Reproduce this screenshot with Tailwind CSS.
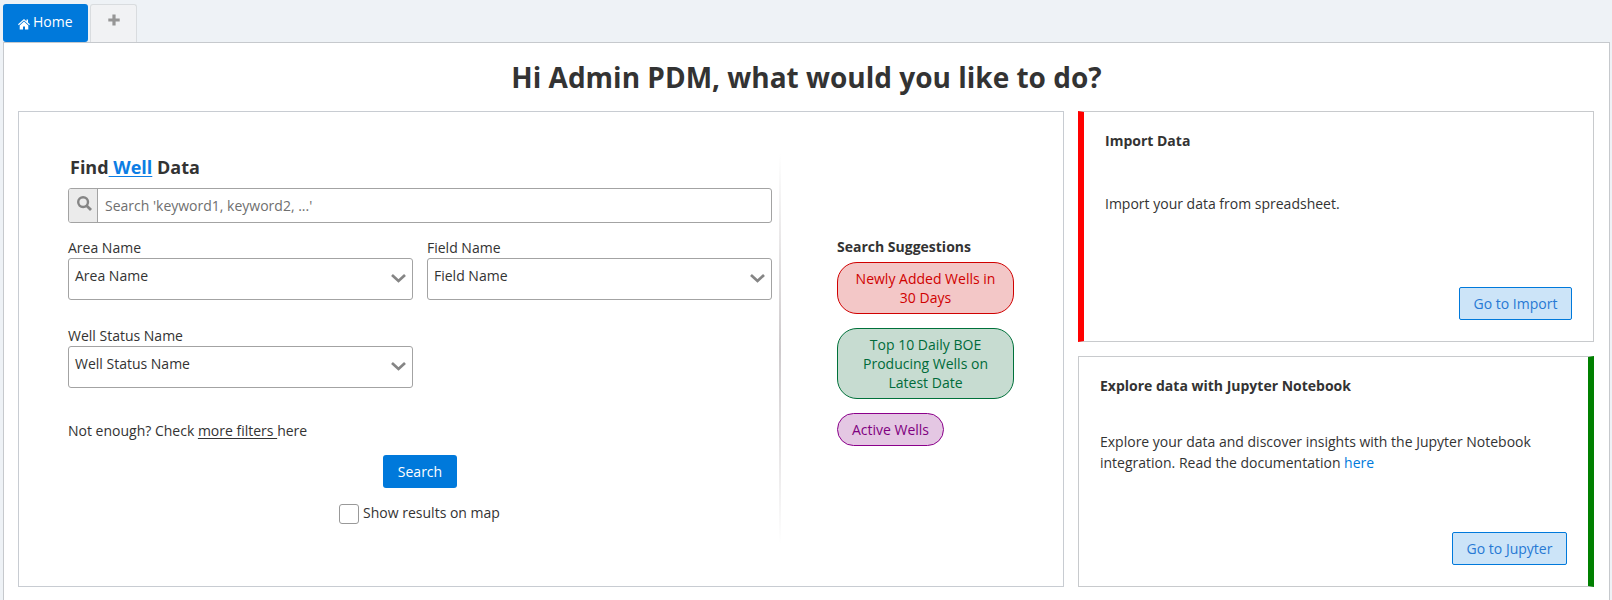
<!DOCTYPE html>
<html lang="en">
<head>
<meta charset="utf-8">
<title>Home</title>
<script src="https://cdn.jsdelivr.net/npm/@tailwindcss/browser@4"></script>
</head>
<body class="h-[600px] overflow-hidden bg-[#eef2f6] font-['Open_Sans',sans-serif] text-[14px] leading-5 text-[#333]">
<div class="flex h-full flex-col pl-[3px] pr-[2px] pt-1">
  <nav class="flex h-[38px] shrink-0 gap-[2px]">
    <a class="flex h-[38px] w-[85px] rounded-[3px] bg-[#0079db] pl-[15px] pt-2 text-white">
      <svg class="mt-[7px] mr-[3px] h-[11px] w-3 shrink-0" viewBox="0 0 12 11" fill="#fff"><path d="M6 0 0 5.3l.8.9L6 1.6l5.2 4.6.8-.9-2-1.8V.6H8.5v1.6z"/><path d="M6 2.6 1.7 6.4v4H5V7.6h2v2.8h3.3v-4z"/></svg>
      Home
    </a>
    <a class="flex h-[38px] w-[47px] justify-center rounded-t-[3px] border border-b-0 border-[#d9dcdf] bg-[#f1f2f4]">
      <svg class="mt-[9px] h-3 w-3" viewBox="0 0 12 12"><path d="M6 .5v11M.3 6h11.4" stroke="#969696" stroke-width="3.2" fill="none"/></svg>
    </a>
  </nav>
  <main class="flex flex-1 flex-col border border-b-0 border-[#c6c9cd] bg-white px-[14px]">
    <h1 class="mt-[14px] h-[54px] text-center text-[28px] font-bold leading-10">Hi Admin PDM, what would you like to do?</h1>
    <div class="flex h-[476px] gap-[14px]">
      <section class="flex w-[1046px] shrink-0 border border-[#c8ccd2] pl-[49px]">
        <div class="w-[704px] shrink-0 pt-[41px]">
          <h2 class="h-[35px] pl-[2px] text-[18px] font-bold leading-7">Find<span class="text-[#0c7de4] underline decoration-1 underline-offset-2">&nbsp;Well</span> Data</h2>
          <div class="flex h-[35px] rounded-[3px] border border-[#a3a3a3]">
            <span class="flex w-[29px] justify-center rounded-l-[2px] border-r border-[#a3a3a3] bg-[#ebebeb] pt-[7px]">
              <svg class="ml-[2px] h-[15px] w-[15px]" viewBox="0 0 15 15" fill="none" stroke="#858585"><circle cx="6.1" cy="6.1" r="4.9" stroke-width="2.4"/><path d="m9.7 9.7 4.3 4.3" stroke-width="2.8"/></svg>
            </span>
            <span class="pl-[7px] pt-[7px] text-[#6f6f6f]">Search 'keyword1, keyword2, ...'</span>
          </div>
          <div class="mt-[15px] grid grid-cols-2 gap-x-[14px] gap-y-[26px]">
            <div>
              <div class="h-5">Area Name</div>
              <div class="flex h-[42px] justify-between rounded-[3px] border border-[#a3a3a3] pl-[6px] pr-[6px] pt-[7px]">Area Name
                <svg class="mt-2 h-[9px] w-[15px]" viewBox="0 0 15 9"><path d="m1 1 6.5 6L14 1" fill="none" stroke="#858585" stroke-width="2.7"/></svg></div>
            </div>
            <div>
              <div class="h-5">Field Name</div>
              <div class="flex h-[42px] justify-between rounded-[3px] border border-[#a3a3a3] pl-[6px] pr-[6px] pt-[7px]">Field Name
                <svg class="mt-2 h-[9px] w-[15px]" viewBox="0 0 15 9"><path d="m1 1 6.5 6L14 1" fill="none" stroke="#858585" stroke-width="2.7"/></svg></div>
            </div>
            <div>
              <div class="h-5">Well Status Name</div>
              <div class="flex h-[42px] justify-between rounded-[3px] border border-[#a3a3a3] pl-[6px] pr-[6px] pt-[7px]">Well Status Name
                <svg class="mt-2 h-[9px] w-[15px]" viewBox="0 0 15 9"><path d="m1 1 6.5 6L14 1" fill="none" stroke="#858585" stroke-width="2.7"/></svg></div>
            </div>
          </div>
          <p class="mt-[33px] h-[34px]">Not enough? Check <span class="underline decoration-1 underline-offset-2">more filters&nbsp;</span>here</p>
          <div class="flex flex-col items-center">
            <button class="h-[33px] w-[74px] rounded-[3px] bg-[#0079db] text-white">Search</button>
            <label class="mt-4 mr-px flex gap-1"><span class="h-5 w-5 rounded-[3px] border border-[#999] bg-white"></span><span class="-mt-px">Show results on map</span></label>
          </div>
        </div>
        <div class="ml-[7px] mt-[42px] h-[390px] w-[2px] shrink-0 bg-linear-to-b from-white via-[#cdc9cb] to-white"></div>
        <div class="ml-[56px] flex w-[177px] flex-col items-start pt-[125px]">
          <h3 class="h-[25px] font-bold">Search Suggestions</h3>
          <div class="h-[52px] w-[177px] rounded-[20px] border border-[#d00000] bg-[#f3c7c7] px-[14px] pt-[6px] text-center leading-[19px] text-[#d00000]">Newly Added Wells in 30 Days</div>
          <div class="mt-[14px] h-[71px] w-[177px] rounded-[20px] border border-[#00713a] bg-[#c7dcd1] px-[14px] pt-[6px] text-center leading-[19px] text-[#006b3a]">Top 10 Daily BOE Producing Wells on Latest Date</div>
          <div class="mt-[14px] h-[33px] w-[107px] rounded-[20px] border border-[#8b008b] bg-[#e4c7e3] pt-[6px] text-center leading-[19px] text-[#800080]">Active Wells</div>
        </div>
      </section>
      <div class="flex w-[516px] flex-col gap-[14px]">
        <section class="flex h-[231px] flex-col border border-l-[6px] border-[#c8cacd] border-l-[#ff0000] px-[21px] pb-[21px] pt-[19px]">
          <h3 class="font-bold">Import Data</h3>
          <p class="mt-[42px] leading-[21px]">Import your data from spreadsheet.</p>
          <button class="mt-auto h-[33px] w-[113px] self-end rounded-[2px] border border-[#0079db] bg-[#cce4f8] text-[#2779d4]">Go to Import</button>
        </section>
        <section class="flex h-[231px] flex-col border border-r-[6px] border-[#c8cacd] border-r-[#008000] px-[21px] pb-[21px] pt-[19px]">
          <h3 class="font-bold">Explore data with Jupyter Notebook</h3>
          <p class="mt-[35px] leading-[21px]">Explore your data and discover insights with the Jupyter Notebook integration. Read the documentation <a class="text-[#0079db]">here</a></p>
          <button class="mt-auto h-[33px] w-[115px] self-end rounded-[2px] border border-[#0079db] bg-[#cce4f8] text-[#2779d4]">Go to Jupyter</button>
        </section>
      </div>
    </div>
  </main>
</div>
</body>
</html>
